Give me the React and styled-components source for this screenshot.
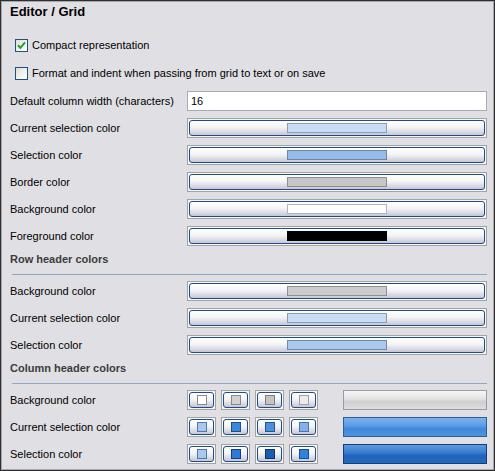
import React from "react";
import styled, { createGlobalStyle } from "styled-components";

const GlobalStyle = createGlobalStyle`
  html, body {
    margin: 0;
    padding: 0;
    background: #e0dfe3;
  }
  * {
    box-sizing: border-box;
  }
`;

const Panel = styled.div`
  width: 495px;
  height: 471px;
  background: #e0dfe3;
  border: 1px solid #2e2e2e;
  box-shadow: inset 0 0 0 1px #a7a6aa;
  font-family: "Liberation Sans", Arial, sans-serif;
  font-size: 11px;
  color: #000;
  padding: 0 7px 0 9px;
  overflow: hidden;
`;

const Title = styled.div`
  height: 22px;
  line-height: 22px;
  margin-bottom: 8px;
  font-size: 13px;
  font-weight: 700;
`;

const CheckRow = styled.label`
  height: 28px;
  display: flex;
  align-items: center;
  gap: 4px;
  padding-left: 5px;
`;

const Box = styled.span`
  width: 13px;
  height: 13px;
  border: 1px solid #1c5180;
  background: linear-gradient(135deg, #dcdcd7 0%, #f4f4f1 60%, #ffffff 100%);
  display: flex;
  align-items: center;
  justify-content: center;
`;

const Row = styled.div`
  height: 27px;
  display: grid;
  grid-template-columns: 177px 300px;
  align-items: center;
`;

const Label = styled.span`
  white-space: nowrap;
`;

const TextInput = styled.div`
  height: 20px;
  border: 1px solid #a5acb5;
  background: #fff;
  padding: 0 3px;
  line-height: 18px;
`;

const Frame = styled.div`
  height: 20px;
  width: ${(p) => p.$w || "100%"};
  border: 1px solid #a3a3a3;
  background: #f6f6f6;
  padding: 1px;
  display: flex;
`;

const Button = styled.div`
  flex: 1;
  border: 1px solid #1d4e84;
  border-radius: 3px;
  background: linear-gradient(
    to bottom,
    #ffffff 0%,
    #f4f4f7 45%,
    #dcdce6 75%,
    #c6c5d7 100%
  );
  display: flex;
  align-items: center;
  justify-content: center;
`;

const Swatch = styled.span`
  width: ${(p) => p.$w}px;
  height: ${(p) => p.$h}px;
  background: ${(p) => p.$c};
  border: 1px solid ${(p) => p.$b || "#8496ad"};
`;

const Section = styled.div`
  height: 28px;
  padding-top: 0;
`;

const SectionTitle = styled.div`
  height: 21px;
  line-height: 21px;
  font-weight: 700;
  color: #3c3c3c;
`;

const Rule = styled.div`
  height: 1px;
  margin: 4px 0 0 2px;
  width: 475px;
  background: #8fa8c2;
`;

const SmallGroup = styled.div`
  display: flex;
  align-items: center;
  gap: 5px;
`;

const Bar = styled.div`
  width: 144px;
  height: 20px;
  margin-left: 20px;
  border: 1px solid ${(p) => p.$b};
  background: ${(p) => p.$bg};
`;

const Check = () => (
  <svg width="9" height="9" viewBox="0 0 9 9">
    <path
      d="M1 4.2 L3.4 6.8 L8 1.4"
      fill="none"
      stroke="#21a121"
      strokeWidth="2"
    />
  </svg>
);

const ColorButton = ({ color, border }) => (
  <Frame>
    <Button>
      <Swatch $w={100} $h={10} $c={color} $b={border} />
    </Button>
  </Frame>
);

const SmallButton = ({ color, border }) => (
  <Frame $w="29px">
    <Button>
      <Swatch $w={10} $h={10} $c={color} $b={border} />
    </Button>
  </Frame>
);

const mainRows = [
  ["Current selection color", "#c8dcf5", "#8c9cb3"],
  ["Selection color", "#97bbe8", "#6f84a1"],
  ["Border color", "#c6c6c6", "#8d8d8d"],
  ["Background color", "#ffffff", "#b5b5b5"],
  ["Foreground color", "#000000", "#000000"],
];

const rowHeaderRows = [
  ["Background color", "#cccccc", "#8f8f8f"],
  ["Current selection color", "#c9dcf4", "#8c9cb3"],
  ["Selection color", "#a9c9ef", "#7389a6"],
];

const columnRows = [
  {
    label: "Background color",
    swatches: [
      ["#ffffff", "#8a8a8a"],
      ["#d2d2d2", "#8a8a8a"],
      ["#c4c4c4", "#7e7e7e"],
      ["#ebebeb", "#a0a0a0"],
    ],
    bar: {
      b: "#9c9c9c",
      bg: "linear-gradient(to bottom, #f6f6f6 0%, #e6e6e6 40%, #cfcfcf 60%, #dedede 100%)",
    },
  },
  {
    label: "Current selection color",
    swatches: [
      ["#a9c8f0", "#5378a8"],
      ["#3a8ad9", "#1f4f88"],
      ["#4b90da", "#24568e"],
      ["#85b1ea", "#4a72a6"],
    ],
    bar: {
      b: "#2c5f98",
      bg: "linear-gradient(to bottom, #7ab2f0 0%, #5d9ee6 40%, #4288d9 60%, #4f93e0 100%)",
    },
  },
  {
    label: "Selection color",
    swatches: [
      ["#a9c8f0", "#5378a8"],
      ["#2c7bd7", "#143f77"],
      ["#1c5cb1", "#0e3567"],
      ["#2f82e2", "#184f8e"],
    ],
    bar: {
      b: "#123e76",
      bg: "linear-gradient(to bottom, #5c9ae2 0%, #3c7fd0 40%, #1f63b9 60%, #2469bd 100%)",
    },
  },
];

export default function App() {
  return (
    <>
      <GlobalStyle />
      <Panel>
        <Title>Editor / Grid</Title>
        <CheckRow>
          <Box>
            <Check />
          </Box>
          Compact representation
        </CheckRow>
        <CheckRow>
          <Box />
          Format and indent when passing from grid to text or on save
        </CheckRow>
        <Row>
          <Label>Default column width (characters)</Label>
          <TextInput>16</TextInput>
        </Row>
        {mainRows.map(([label, c, b]) => (
          <Row key={label}>
            <Label>{label}</Label>
            <ColorButton color={c} border={b} />
          </Row>
        ))}
        <Section>
          <SectionTitle>Row header colors</SectionTitle>
          <Rule />
        </Section>
        {rowHeaderRows.map(([label, c, b]) => (
          <Row key={label}>
            <Label>{label}</Label>
            <ColorButton color={c} border={b} />
          </Row>
        ))}
        <Section>
          <SectionTitle>Column header colors</SectionTitle>
          <Rule />
        </Section>
        {columnRows.map((r) => (
          <Row key={r.label}>
            <Label>{r.label}</Label>
            <SmallGroup>
              {r.swatches.map(([c, b], i) => (
                <SmallButton key={i} color={c} border={b} />
              ))}
              <Bar $b={r.bar.b} $bg={r.bar.bg} />
            </SmallGroup>
          </Row>
        ))}
      </Panel>
    </>
  );
}
